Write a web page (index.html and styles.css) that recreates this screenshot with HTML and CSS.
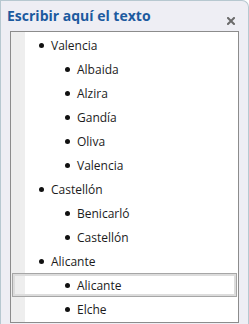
FILE: index.html
```html
<!DOCTYPE html>
<html lang="es">
<head>
    <meta charset="UTF-8">
    <meta name="viewport" content="width=device-width, initial-scale=1.0">
    <title>Escribir aquí el texto</title>
    <link rel="stylesheet" href="styles.css">
</head>
<body>
    <div class="window">
        <div class="titlebar">
            <span class="title">Escribir aquí el texto</span>
            <svg class="close" width="8" height="8" viewBox="0 0 8 8">
                <path d="M1 1 L7 7 M7 1 L1 7" stroke="#6b6b6b" stroke-width="2" stroke-linecap="square"/>
            </svg>
        </div>
        <div class="tree">
            <ul class="list">
                <li class="item lvl1"><span class="dot"></span>Valencia</li>
                <li class="item lvl2"><span class="dot"></span>Albaida</li>
                <li class="item lvl2"><span class="dot"></span>Alzira</li>
                <li class="item lvl2"><span class="dot"></span>Gandía</li>
                <li class="item lvl2"><span class="dot"></span>Oliva</li>
                <li class="item lvl2"><span class="dot"></span>Valencia</li>
                <li class="item lvl1"><span class="dot"></span>Castellón</li>
                <li class="item lvl2"><span class="dot"></span>Benicarló</li>
                <li class="item lvl2"><span class="dot"></span>Castellón</li>
                <li class="item lvl1"><span class="dot"></span>Alicante</li>
                <li class="item lvl2 selected"><span class="dot"></span>Alicante</li>
                <li class="item lvl2"><span class="dot"></span>Elche</li>
            </ul>
        </div>
    </div>
</body>
</html>
```

FILE: styles.css
```css
body {
    margin: 0;
    font-family: "Open Sans", "Noto Sans", sans-serif;
}
.window {
    box-sizing: border-box;
    width: 249px;
    height: 324px;
    background: #eeeef4;
    border: 1px solid #b7c8d0;
    border-bottom: none;
    border-top-right-radius: 7px;
    padding: 0 9px;
    display: flex;
    flex-direction: column;
}
.titlebar {
    height: 30px;
    display: flex;
    align-items: center;
    justify-content: space-between;
    margin: 0 4px 0 -3px;
}
.title {
    font-size: 14px;
    font-weight: bold;
    color: #1c5a9f;
    margin-top: -2px;
}
.close {
    margin-top: 10px;
}
.tree {
    flex: 1;
    border: 1px solid #8c8c8c;
    background: linear-gradient(to right, #eeeeee 14px, #fff 14px);
    padding-top: 1px;
    margin-bottom: 1px;
}
.list {
    list-style: none;
    margin: 0;
    padding: 0;
}
.item {
    height: 24px;
    display: flex;
    align-items: center;
    font-size: 12px;
    color: #1b1b1b;
}
.dot {
    width: 5px;
    height: 5px;
    border-radius: 50%;
    background: #111;
    margin-right: 7px;
}
.lvl1 {
    padding-left: 28px;
}
.lvl2 {
    padding-left: 54px;
}
.selected {
    margin: 0 1px;
    padding-left: 53px;
    box-shadow: inset 0 0 0 1px #a6a6a6, inset 0 0 0 3px #dcdcdc;
}
```
